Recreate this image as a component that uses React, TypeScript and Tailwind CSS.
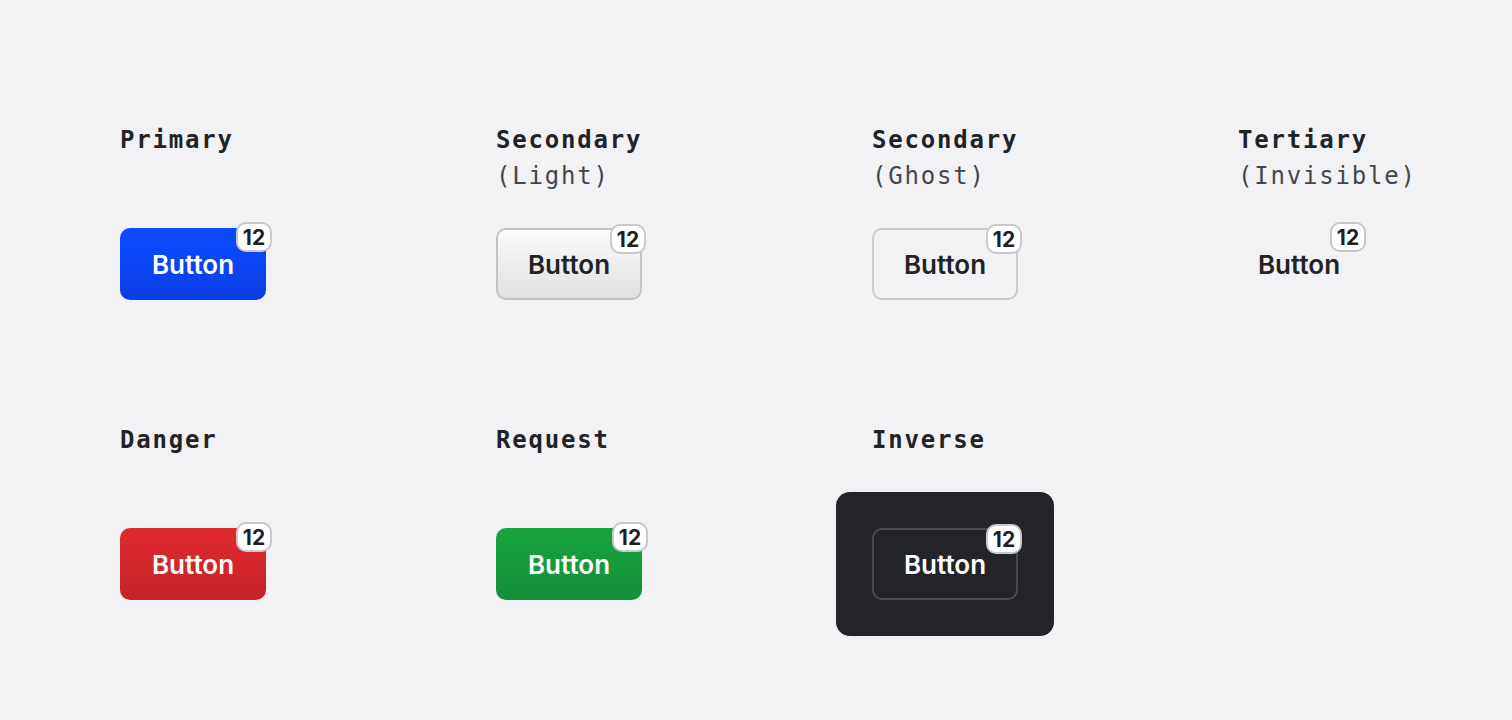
const mono = "font-['DejaVu_Sans_Mono',monospace]";

type Variant = 'primary' | 'light' | 'ghost' | 'tertiary' | 'danger' | 'request' | 'inverse';

const variantClass: Record<Variant, string> = {
  primary: 'w-[146px] bg-gradient-to-b from-[#0b4cff] to-[#0b3ee4] text-white',
  light: 'w-[146px] bg-gradient-to-b from-[#fbfbfb] to-[#e1e1e2] border-2 border-[#c3c3c6] text-[#222327]',
  ghost: 'w-[146px] border-2 border-[#cbcbce] text-[#222327]',
  tertiary: 'w-[122px] text-[#222327]',
  danger: 'w-[146px] bg-gradient-to-b from-[#de2a2d] to-[#c52328] text-white',
  request: 'w-[146px] bg-gradient-to-b from-[#17a440] to-[#168f39] text-white',
  inverse: 'w-[146px] border-2 border-[#4a4b51] text-white',
};

const DemoButton = ({ variant }: { variant: Variant }) => (
  <button
    className={`relative h-[72px] rounded-[10px] flex items-center justify-center font-['Inter',sans-serif] text-[26px] font-semibold ${variantClass[variant]}`}
  >
    Button
    <span className="absolute -top-[6px] -right-[6px] w-[36px] h-[30px] rounded-[10px] bg-white border-2 border-[#c8c8cb] flex items-center justify-center text-[21px] font-bold text-[#1f2024] leading-none">
      12
    </span>
  </button>
);

const Cell = ({ title, sub, variant }: { title: string; sub?: string; variant: Variant }) => (
  <div className="flex flex-col">
    <div className={`${mono} h-[72px] text-[24px] leading-[36px] tracking-[1.8px] text-[#222326]`}>
      <div className="font-bold">{title}</div>
      {sub && <div className="text-[#45464b]">{sub}</div>}
    </div>
    <div className="mt-[34px]">
      {variant === 'inverse' ? (
        <div className="-m-[36px] p-[36px] bg-[#232428] rounded-[14px] w-fit">
          <DemoButton variant={variant} />
        </div>
      ) : (
        <DemoButton variant={variant} />
      )}
    </div>
  </div>
);

export default function App() {
  return (
    <div className="min-h-screen bg-[#f2f2f4] pl-[120px] pt-[122px]">
      <div className="grid grid-cols-[376px_376px_366px_auto] gap-y-[122px]">
        <Cell title="Primary" variant="primary" />
        <Cell title="Secondary" sub="(Light)" variant="light" />
        <Cell title="Secondary" sub="(Ghost)" variant="ghost" />
        <Cell title="Tertiary" sub="(Invisible)" variant="tertiary" />
        <Cell title="Danger" variant="danger" />
        <Cell title="Request" variant="request" />
        <Cell title="Inverse" variant="inverse" />
      </div>
    </div>
  );
}
